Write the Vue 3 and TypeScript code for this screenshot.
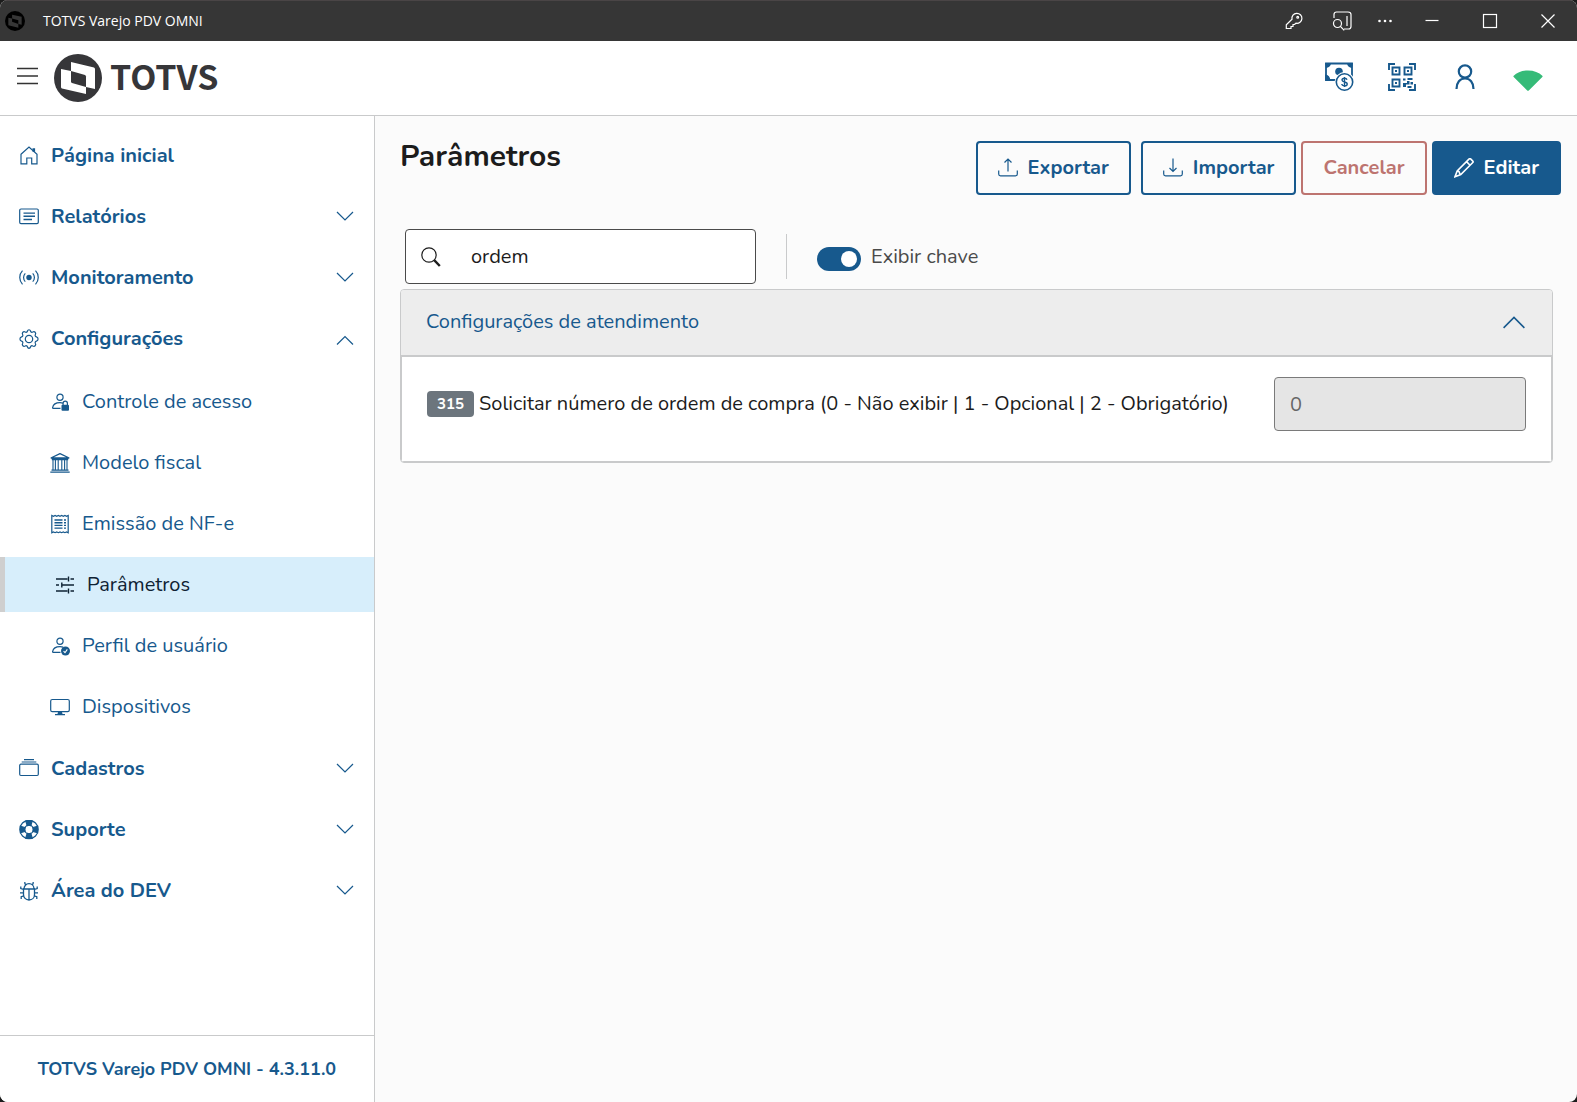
<script setup lang="ts">
import { ref } from 'vue'

interface MenuItem {
  label: string
  icon: string
  expandable?: boolean
  open?: boolean
  children?: { label: string; icon: string; active?: boolean }[]
}

const search = ref('ordem')
const showKey = ref(true)
const orderNumber = ref('0')

const menu: MenuItem[] = [
  { label: 'Página inicial', icon: 'house' },
  { label: 'Relatórios', icon: 'report', expandable: true },
  { label: 'Monitoramento', icon: 'broadcast', expandable: true },
  {
    label: 'Configurações',
    icon: 'gear',
    expandable: true,
    open: true,
    children: [
      { label: 'Controle de acesso', icon: 'userLock' },
      { label: 'Modelo fiscal', icon: 'bank' },
      { label: 'Emissão de NF-e', icon: 'receipt' },
      { label: 'Parâmetros', icon: 'sliders', active: true },
      { label: 'Perfil de usuário', icon: 'userCheck' },
      { label: 'Dispositivos', icon: 'display' },
    ],
  },
  { label: 'Cadastros', icon: 'collection', expandable: true },
  { label: 'Suporte', icon: 'lifebuoy', expandable: true },
  { label: 'Área do DEV', icon: 'bug', expandable: true },
]

const person =
  '<circle cx="10" cy="5.2" r="3.1"/><path d="M10.5 16.4H3.2c-.5 0-.7-.3-.6-.8.5-2.800 3.300-5 7.400-5 1.200 0 2.200.2 3.100.5"/>'

const icons: Record<string, string> = {
  house: '<path d="M2 8.300 10 1l8 7.300V17.900h-5.300v-5.900H7.800v5.900H2z"/><path d="M14.800 2.300v3.500" stroke-width="2.600"/>',
  report:
    '<rect x=".7" y="2" width="18.600" height="14.600" rx="1.300"/><path d="M4.500 6.100h11.500M4.500 9.300h11.500M4.500 12.500h8.500" stroke-width="1.400"/>',
  broadcast:
    '<circle cx="10" cy="9.500" r="2.700" fill="currentColor" stroke="none"/><path d="M6.300 5.300a6 6 0 0 0 0 8.400M13.700 5.300a6 6 0 0 1 0 8.400M3.500 2.700a9.800 9.800 0 0 0 0 13.600M16.500 2.700a9.800 9.800 0 0 1 0 13.600"/>',
  gear:
    '<circle cx="10" cy="10" r="3.700"/><path d="M8.500 2c.4-1.700 2.600-1.700 3 0 .3 1.200 1.300 1.600 2.300 1 1.800-1 3.600.8 2.600 2.500-.6 1.100-.1 2.100 1 2.400 2.200.7 2.200 3.500 0 4.200-1.100.3-1.600 1.300-1 2.400 1 1.700-.8 3.500-2.600 2.500-1-.6-2-.2-2.300 1-.4 1.700-2.600 1.700-3 0-.3-1.200-1.300-1.600-2.300-1-1.800 1-3.600-.8-2.600-2.500.6-1.100.1-2.100-1-2.400-2.200-.7-2.200-3.500 0-4.200 1.100-.3 1.600-1.300 1-2.400-1-1.700.8-3.500 2.600-2.500 1 .6 2 .2 2.300-1z"/>',
  userLock:
    person +
    '<rect x="11.500" y="12.800" width="7.500" height="6" rx="1" fill="currentColor" stroke="none"/><path d="M13.100 13v-1.700a2.150 2.150 0 0 1 4.300 0V13"/>',
  userCheck:
    person +
    '<circle cx="15.500" cy="15" r="4.500" fill="currentColor" stroke="none"/><path d="m13.600 15.200 1.400 1.500 2.300-3.300" stroke="#fff" stroke-width="1.100"/>',
  bank:
    '<path d="M.8 5 10 .6 19.200 5zM1.800 6.500h16.400M1.500 17.200h17M.3 19.200h19.400" stroke-width="1.300"/><path d="M3 7v10M5.400 7v10M8.200 7v10M11.800 7v10M14.600 7v10M17 7v10" stroke-width="1.100"/>',
  receipt:
    '<path d="M1.800 1.500v17.200l1.700-.8 1.600.8 1.600-.8 1.700.8 1.600-.8 1.600.8 1.700-.8 1.600.8 1.600-.8 1.700.8V1.500l-1.700.8-1.600-.8-1.600.8-1.700-.8-1.600.8-1.600-.8-1.700.8-1.600-.8-1.600.8z"/><path d="M4.500 6h8M4.500 8.700h8M4.500 11.400h8M4.500 14.100h8M14 6h2M14 8.700h2M14 11.400h2M14 14.100h2" stroke-width="1.400"/>',
  sliders:
    '<path d="M1 4h11.500M15.500 4H19M13.500 1.500v5M1 10h3M6.800 7.500v5M6.800 10H19M1 16h11.500M15.500 16H19M13.500 13.500v5" stroke-width="1.400"/>',
  display:
    '<rect x=".7" y="2.500" width="18.600" height="12.200" rx="1.600"/><path d="M8 15h4l.5 2H15v1.300H5V17h2.500z" fill="currentColor" stroke="none"/>',
  collection:
    '<rect x=".7" y="5.200" width="18.600" height="11.300" rx="1.200"/><path d="M2.700 3h14.600M5 .7h10"/>',
  lifebuoy:
    '<g transform="translate(0 -.5)"><circle cx="10" cy="10" r="9.200"/><circle cx="10" cy="10" r="4.400"/><path d="M6.800 1.500h6.400l-1.400 4.600a4.400 4.400 0 0 0-3.600 0zM6.800 18.500h6.400l-1.400-4.600a4.400 4.400 0 0 1-3.600 0zM1.500 6.800v6.400l4.600-1.400a4.400 4.400 0 0 1 0-3.600zM18.500 6.800v6.400l-4.600-1.400a4.400 4.400 0 0 0 0-3.600z" fill="currentColor"/></g>',
  bug:
    '<path d="M4.500 8h11v5.500c0 3-2.200 5.500-5.500 5.500s-5.500-2.500-5.500-5.500zM5 8c0-3 2-5.300 5-5.300S15 5 15 8M10 8v11M6.800 3.800C5.800 3 5.600 2.200 5.800 1M13.200 3.800c1-.8 1.200-1.600 1-2.800M4.500 8.500 1.800 7.500V5.500M15.500 8.500l2.700-1V5.500M4.500 11.800H1M15.500 11.800H19M4.800 14.800l-2.600.9V18M15.200 14.800l2.600.9V18" stroke-width="1.300"/>',
  down: '<path d="m2 5 8 8 8-8"/>',
  up: '<path d="m2 15.500 8-8 8 8"/>',
  collapse: '<path d="m2 14.500 8-8 8 8"/>',
  upload: '<path d="M.7 12.500V16c0 1 .6 1.800 1.800 1.800h15c1.200 0 1.800-.8 1.800-1.800v-3.500M10 13.500V1M6.500 4.500 10 1l3.500 3.500"/>',
  download: '<path d="M.7 12.500V16c0 1 .6 1.800 1.800 1.800h15c1.200 0 1.800-.8 1.800-1.800v-3.500M10 .5v13M6.500 10l3.500 3.500 3.500-3.500"/>',
  pencil:
    '<path d="M15.200.9a1 1 0 0 1 1.400 0l2.200 2.200a1 1 0 0 1 0 1.400L6.800 16.600 1 18.700 3.200 12.900zM12.500 3.600l3.600 3.600M3.500 13.100l1.500.5 1 2.500" stroke-width="1.600"/>',
  search: '<circle cx="8" cy="8" r="7.200"/><path d="m13.200 13.200 5.600 5.800" stroke-width="2.400"/>',
}
</script>

<template>
  <div class="window">
    <header class="titlebar">
      <svg class="app-icon" viewBox="0 0 48 48" aria-hidden="true">
        <circle cx="24" cy="24" r="24" fill="#000" />
        <path d="M17 9 40 14v19l-8-2v9L8 34V16l9 2z" fill="#363636" />
        <path d="m17 18 15 4v9l-15-5z" fill="#000" />
      </svg>
      <span class="app-name">TOTVS Varejo PDV OMNI</span>
      <div class="window-tools">
        <button type="button" class="tool" aria-label="Senhas">
          <svg class="line" viewBox="0 0 20 20" width="20" height="20">
            <path d="M8 8.200a5 5 0 1 1 4 4L10.500 13.500H9v2H7v2H2.300v-3.800z" /><circle cx="13.700" cy="6.300" r=".9" />
          </svg>
        </button>
        <button type="button" class="tool" aria-label="Pesquisar na barra lateral">
          <svg class="line" viewBox="0 0 20 20" width="20" height="20">
            <path d="M2 7V3.500C2 2 3 1 4.500 1h11.500C18 1 19 2 19 3.500v12c0 1.500-1 2.500-2.500 2.500H12M15 5v10" />
            <circle cx="5.500" cy="12.500" r="4" /><path d="m8.400 15.300 3.800 4" />
          </svg>
        </button>
        <button type="button" class="tool more" aria-label="Mais opções">
          <svg viewBox="0 0 20 20" width="20" height="20" fill="currentColor">
            <circle cx="4.500" cy="10" r="1.300" /><circle cx="10" cy="10" r="1.300" /><circle cx="15.500" cy="10" r="1.300" />
          </svg>
        </button>
        <button type="button" class="control" aria-label="Minimizar">
          <svg class="line" viewBox="0 0 20 20" width="20" height="20"><path d="M3.500 9.500h13" /></svg>
        </button>
        <button type="button" class="control" aria-label="Maximizar">
          <svg class="line" viewBox="0 0 20 20" width="20" height="20"><rect x="3.500" y="3.500" width="13" height="13" /></svg>
        </button>
        <button type="button" class="control" aria-label="Fechar">
          <svg class="line" viewBox="0 0 20 20" width="20" height="20"><path d="m3.500 3.500 13 13m0-13-13 13" /></svg>
        </button>
      </div>
    </header>

    <div class="topbar">
      <button type="button" class="burger" aria-label="Menu">
        <svg viewBox="0 0 22 20" width="22" height="20" stroke="#333" stroke-width="1.500">
          <path d="M0 2.500h21M0 10h21M0 17.500h21" />
        </svg>
      </button>
      <a href="#" class="brand" aria-label="TOTVS">
        <svg viewBox="0 0 48 48" width="48" height="48" aria-hidden="true">
          <circle cx="24" cy="24" r="24" fill="#363639" />
          <path d="M17 8 40 13.500Q41 14 41 15v20l-9-2v7L8 34.500Q7 34 7 33V15l10 2z" fill="#fff" />
          <path d="m17 17 14 4q1 .5 1 1.500V33l-14-4q-1-.5-1-1.500z" fill="#363639" />
        </svg>
        <span class="brand-name">TOTVS</span>
      </a>
      <div class="quick">
        <button type="button" class="quick-item" aria-label="Caixa">
          <svg viewBox="0 0 30 30" width="30" height="30">
            <path d="M2 1.500h26V18H2z" fill="none" stroke="currentColor" stroke-width="1.800" />
            <path d="M1 1h6a5 5 0 0 1-5 5zM29 1h-6a5 5 0 0 0 5 5zM1 18.500v-6a5 5 0 0 1 5 6z" fill="currentColor" />
            <circle cx="15" cy="9.500" r="3.800" fill="currentColor" />
            <circle cx="20.500" cy="20" r="10" fill="#fff" />
            <circle cx="20.500" cy="20" r="8.200" fill="#fff" stroke="currentColor" stroke-width="1.600" />
            <path d="M23 17.800c-.3-1-1.300-1.500-2.500-1.500-1.500 0-2.500.7-2.500 1.800 0 2.600 5.200 1.200 5.200 3.900 0 1.200-1.100 1.900-2.700 1.900-1.500 0-2.500-.7-2.700-1.900M20.500 15v10" fill="none" stroke="currentColor" stroke-width="1.400" />
          </svg>
        </button>
        <button type="button" class="quick-item" aria-label="QR Code">
          <svg viewBox="0 0 30 30" width="30" height="30" fill="none" stroke="currentColor" stroke-width="2">
            <path d="M2 8V2h6M22 2h6v6M2 22v6h6M22 28h6v-6M5.500 5.500h7v7h-7zM17.500 5.500h7v7h-7zM5.500 17.500h7v7h-7z" stroke-width="1.900" />
            <path d="M8 8h2v2H8zM20 8h2v2h-2zM8 20h2v2H8zM16 16.500h2.500v2H16zM20.500 16h5v2h-5zM16 21h4v-2h2.500v3.500H19V25h-3zM23.500 20H26v2.500h-2.500zM20.500 24h4v2h-4z" fill="currentColor" stroke="none" />
          </svg>
        </button>
        <button type="button" class="quick-item" aria-label="Usuário">
          <svg viewBox="0 0 30 30" width="30" height="30" fill="none" stroke="currentColor" stroke-width="2.200">
            <circle cx="15" cy="9.500" r="6.200" /><path d="M6.500 27c0-6.500 3.500-10.500 8.500-10.500s8.500 4 8.500 10.500" />
          </svg>
        </button>
        <button type="button" class="quick-item online" aria-label="Conectado">
          <svg viewBox="0 0 30 30" width="30" height="30" fill="currentColor">
            <path d="M.7 15Q0 14.500 .7 13.700C4 10.500 9 8.500 15 8.500s11 2 14.300 5.200q.7.8 0 1.300L15.800 28.500q-.8.700-1.600 0z" />
          </svg>
        </button>
      </div>
    </div>

    <div class="body">
      <aside class="sidebar">
        <nav class="menu" aria-label="Principal">
          <template v-for="item in menu" :key="item.label">
            <a href="#" class="item">
              <svg class="icon" viewBox="0 0 20 20" aria-hidden="true" v-html="icons[item.icon]"></svg>
              <span class="label">{{ item.label }}</span>
              <svg
                v-if="item.expandable"
                class="icon"
                viewBox="0 0 20 20"
                aria-hidden="true"
                v-html="icons[item.open ? 'up' : 'down']"
              ></svg>
            </a>
            <div v-if="item.children" class="submenu">
              <a v-for="child in item.children" :key="child.label" href="#" class="item sub" :class="{ active: child.active }">
                <svg class="icon" viewBox="0 0 20 20" aria-hidden="true" v-html="icons[child.icon]"></svg>
                <span class="label">{{ child.label }}</span>
              </a>
            </div>
          </template>
        </nav>
        <footer class="version">TOTVS Varejo PDV OMNI - 4.3.11.0</footer>
      </aside>

      <main class="content">
        <div class="page-head">
          <h1>Parâmetros</h1>
          <div class="actions">
            <button type="button" class="btn spaced">
              <svg class="icon" viewBox="0 0 20 20" aria-hidden="true" v-html="icons.upload"></svg>Exportar
            </button>
            <button type="button" class="btn">
              <svg class="icon" viewBox="0 0 20 20" aria-hidden="true" v-html="icons.download"></svg>Importar
            </button>
            <button type="button" class="btn danger">Cancelar</button>
            <button type="button" class="btn primary">
              <svg class="icon" viewBox="0 0 20 20" aria-hidden="true" v-html="icons.pencil"></svg>Editar
            </button>
          </div>
        </div>

        <div class="filters">
          <label class="search">
            <svg class="icon" viewBox="0 0 20 20" aria-hidden="true" v-html="icons.search"></svg>
            <input v-model="search" type="text" aria-label="Pesquisar" />
          </label>
          <span class="divider"></span>
          <label class="toggle">
            <input v-model="showKey" type="checkbox" role="switch" />
            <span>Exibir chave</span>
          </label>
        </div>

        <section class="accordion">
          <button type="button" class="accordion-head" aria-expanded="true">
            <span>Configurações de atendimento</span>
            <svg class="icon large" viewBox="0 0 20 20" aria-hidden="true" v-html="icons.collapse"></svg>
          </button>
          <div class="accordion-body">
            <label for="param-315" class="param">
              <span class="badge">315</span>
              <span>Solicitar número de ordem de compra (0 - Não exibir | 1 - Opcional | 2 - Obrigatório)</span>
            </label>
            <input id="param-315" v-model="orderNumber" class="value" type="text" disabled />
          </div>
        </section>
      </main>
    </div>
  </div>
</template>

<style>
body {
  margin: 0;
  background: #1c1c1c;
}
</style>

<style scoped>
* {
  box-sizing: border-box;
}
.window {
  --blue: #17598d;
  --line: #c9cacb;
  display: flex;
  flex-direction: column;
  min-height: 100vh;
  overflow: hidden;
  border-radius: 8px;
  background: #fbfbfb;
  color: #1c1c1c;
  font-family: 'Nunito', 'Open Sans', 'Noto Sans', sans-serif;
  font-size: 20px;
  line-height: 28px;
}
button,
input {
  font: inherit;
  color: inherit;
}
button {
  border: 0;
  padding: 0;
  background: none;
  cursor: pointer;
}
a {
  color: inherit;
  text-decoration: none;
}
svg {
  display: block;
  flex: none;
}
.line {
  fill: none;
  stroke: currentColor;
  stroke-width: 1.2;
}
.icon {
  width: 20px;
  height: 20px;
  fill: none;
  stroke: currentColor;
  stroke-width: 1.2;
}

/* Title bar */
.titlebar {
  display: flex;
  align-items: center;
  height: 41px;
  padding-left: 5px;
  border-top: 1px solid #4a4546;
  background: #363636;
  color: #fff;
}
.app-icon {
  width: 20px;
  height: 20px;
}
.app-name {
  margin-left: 18px;
  font-family: 'Open Sans', 'Noto Sans', sans-serif;
  font-size: 14px;
  line-height: 20px;
}
.window-tools {
  display: flex;
  align-items: center;
  margin-left: auto;
}
.tool {
  display: grid;
  place-items: center;
  width: 48px;
  height: 40px;
}
.tool.more {
  width: 37px;
}
.control {
  display: grid;
  place-items: center;
  width: 58px;
  height: 40px;
}

/* Top bar */
.topbar {
  display: flex;
  align-items: center;
  height: 75px;
  padding: 0 34px 0 17px;
  border-bottom: 1px solid var(--line);
  background: #fff;
}
.burger {
  margin-right: 15px;
  padding-bottom: 4px;
}
.brand {
  display: flex;
  align-items: center;
  gap: 8px;
  color: #363639;
}
.brand-name {
  padding-bottom: 4px;
  font-family: 'Noto Sans CJK JP', 'Roboto', sans-serif;
  font-size: 34px;
  font-weight: 700;
  line-height: 44px;
}
.quick {
  display: flex;
  gap: 33px;
  margin-left: auto;
  padding-bottom: 3px;
  color: var(--blue);
}
.online {
  color: #35bb78;
}

/* Sidebar */
.body {
  display: flex;
  flex: 1;
}
.sidebar {
  display: flex;
  flex-direction: column;
  flex: none;
  width: 375px;
  border-right: 1px solid var(--line);
  background: #fff;
  color: var(--blue);
}
.menu {
  display: flex;
  flex-direction: column;
  flex: 1;
  gap: 6px;
  padding-top: 12px;
}
.item {
  display: flex;
  align-items: center;
  gap: 12px;
  height: 55px;
  padding: 0 19px;
  font-weight: 700;
}
.label {
  flex: 1;
}
.submenu {
  display: flex;
  flex-direction: column;
  gap: 6px;
  margin: 2px 0 1px;
}
.sub {
  padding-left: 50px;
  font-weight: 400;
}
.active {
  border-left: 5px solid #cfcfcf;
  background: #d7eefb;
  color: #0e2233;
}
.version {
  padding: 19px 0;
  border-top: 1px solid var(--line);
  font-size: 18px;
  font-weight: 700;
  text-align: center;
}

/* Content */
.content {
  flex: 1;
  min-width: 0;
  padding: 25px 16px 0 25px;
}
.page-head {
  display: flex;
  justify-content: space-between;
  align-items: flex-start;
}
h1 {
  margin: 0;
  font-size: 30px;
  font-weight: 700;
  line-height: 32px;
}
.actions {
  display: flex;
  gap: 5px;
}
.btn {
  display: flex;
  align-items: center;
  gap: 10px;
  height: 54px;
  padding: 0 20px;
  border: 2px solid var(--blue);
  border-radius: 4px;
  color: var(--blue);
  font-weight: 700;
}
.spaced {
  margin-right: 5px;
}
.danger {
  border-color: #bd7470;
  color: #bd7470;
}
.primary {
  background: var(--blue);
  color: #fff;
}
.filters {
  display: flex;
  align-items: center;
  margin: 34px 0 5px 5px;
}
.search {
  display: flex;
  align-items: center;
  gap: 30px;
  width: 351px;
  height: 55px;
  padding: 0 15px;
  border: 1px solid #4a4a4a;
  border-radius: 4px;
  background: #fff;
}
.search input {
  flex: 1;
  min-width: 0;
  padding: 0;
  border: 0;
  outline: 0;
  background: none;
}
.divider {
  width: 1px;
  height: 45px;
  margin: 0 30px;
  background: var(--line);
}
.toggle {
  display: flex;
  align-items: center;
  gap: 10px;
  color: #4a4a4a;
}
.toggle input {
  appearance: none;
  display: flex;
  align-items: center;
  width: 44px;
  height: 24px;
  margin: 4px 0 0;
  padding: 4px;
  border-radius: 12px;
  background: #9a9a9a;
}
.toggle input::before {
  content: '';
  width: 16px;
  height: 16px;
  border-radius: 50%;
  background: #fff;
}
.toggle input:checked {
  justify-content: flex-end;
  background: var(--blue);
}
.accordion {
  margin-right: 8px;
  border: 1px solid var(--line);
  border-radius: 4px;
  overflow: hidden;
}
.accordion-head {
  display: flex;
  justify-content: space-between;
  align-items: center;
  width: 100%;
  height: 65px;
  padding: 0 25px 2px;
  background: #ededed;
  color: var(--blue);
}
.large {
  width: 26px;
  height: 26px;
}
.accordion-body {
  display: flex;
  justify-content: space-between;
  align-items: flex-start;
  padding: 20px 25px 30px;
  border: 1px solid var(--line);
  border-top-width: 2px;
  background: #fff;
}
.param {
  display: flex;
  align-items: center;
  gap: 5px;
  height: 54px;
}
.badge {
  padding: 0 10px;
  border-radius: 4px;
  background: #6c757d;
  color: #fff;
  font-size: 15px;
  font-weight: 700;
  line-height: 26px;
}
.value {
  width: 252px;
  height: 54px;
  padding: 0 15px;
  border: 1px solid #7a7a7a;
  border-radius: 4px;
  background: #e5e5e5;
  color: #666;
}
</style>
